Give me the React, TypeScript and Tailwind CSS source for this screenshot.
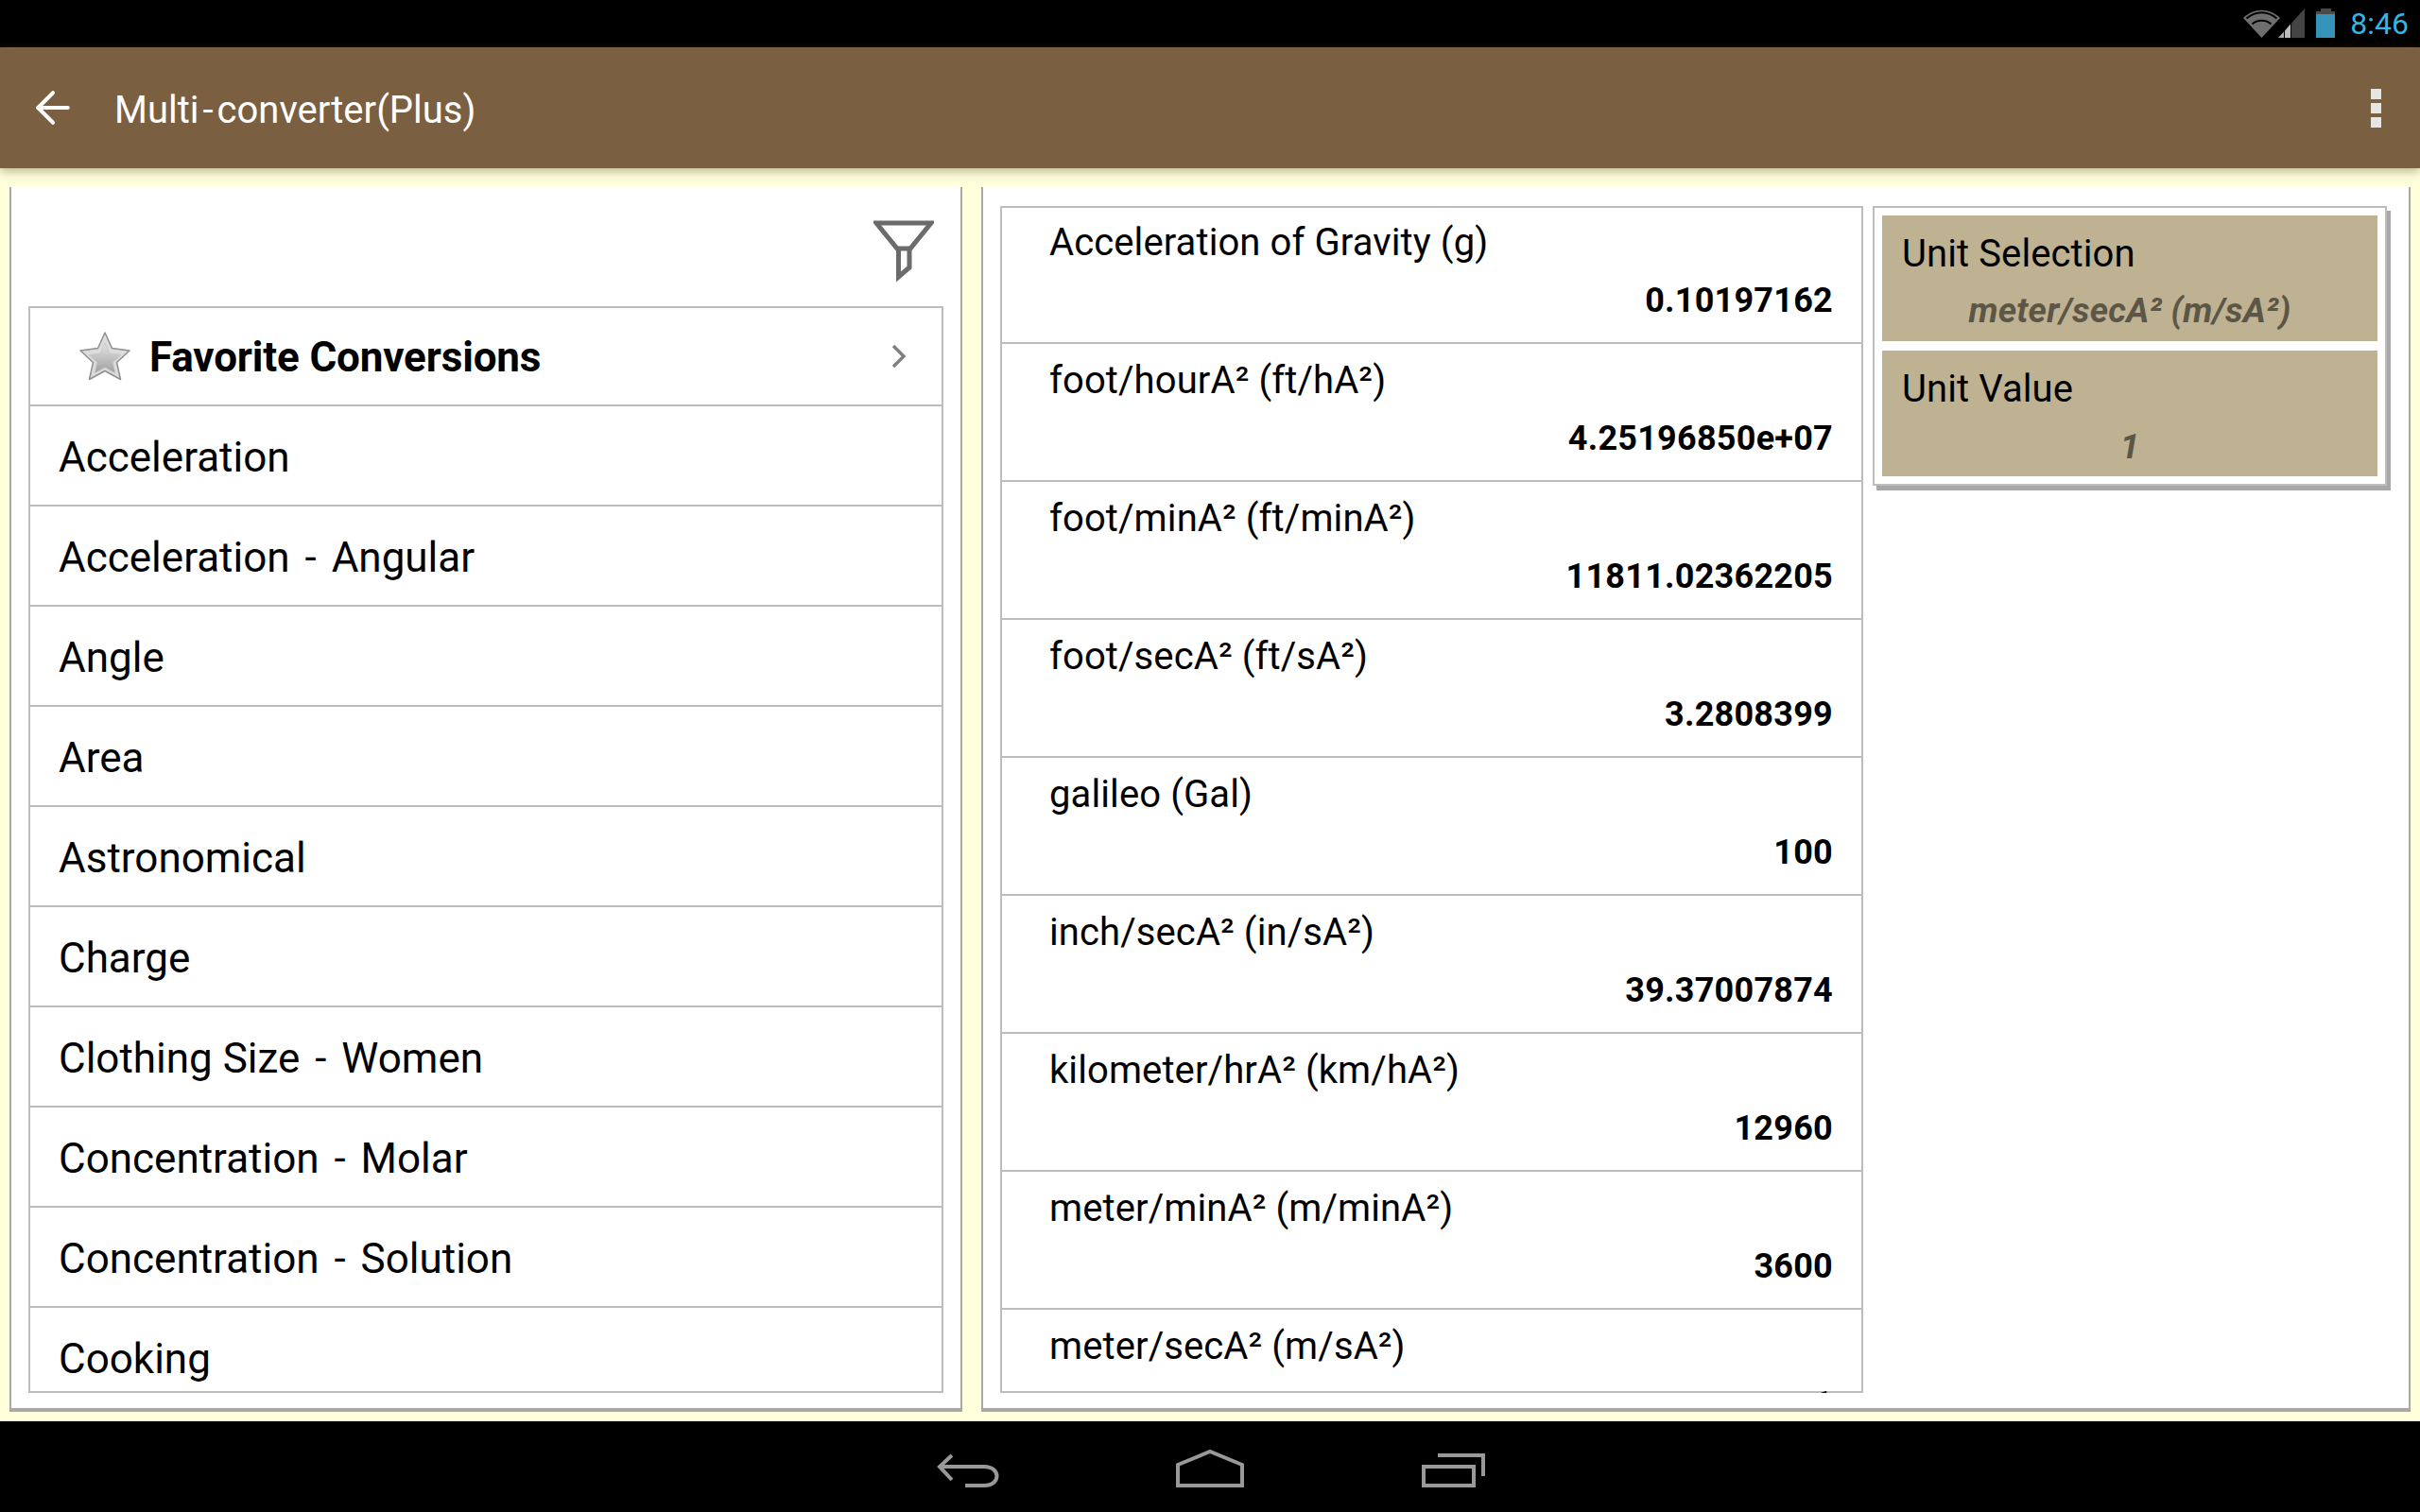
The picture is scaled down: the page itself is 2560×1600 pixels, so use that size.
import { ArrowLeft } from 'lucide-react';

const categories = [
  'Acceleration',
  'Acceleration - Angular',
  'Angle',
  'Area',
  'Astronomical',
  'Charge',
  'Clothing Size - Women',
  'Concentration - Molar',
  'Concentration - Solution',
  'Cooking',
];

const units = [
  { name: 'Acceleration of Gravity (g)', value: '0.10197162' },
  { name: 'foot/hourA² (ft/hA²)', value: '4.25196850e+07' },
  { name: 'foot/minA² (ft/minA²)', value: '11811.02362205' },
  { name: 'foot/secA² (ft/sA²)', value: '3.2808399' },
  { name: 'galileo (Gal)', value: '100' },
  { name: 'inch/secA² (in/sA²)', value: '39.37007874' },
  { name: 'kilometer/hrA² (km/hA²)', value: '12960' },
  { name: 'meter/minA² (m/minA²)', value: '3600' },
  { name: 'meter/secA² (m/sA²)', value: '1' },
];

function StatusIcons() {
  return (
    <svg width="98" height="32" viewBox="0 0 98 32" className="mr-[15px]">
      {/* wifi */}
      <path d="M0 10 C11 -1 28 -1 39 10 L19.5 31 Z" fill="#6e6e6e" />
      <path d="M3.5 10.5 C13 2 26 2 35.5 10.5" fill="none" stroke="#000" strokeWidth="2" />
      <path d="M9.5 16.5 C15 11.5 24 11.5 29.5 16.5" fill="none" stroke="#000" strokeWidth="2" />
      {/* signal */}
      <path d="M37 31 L43 24.5 V31 Z" fill="#a8a8a8" />
      <path d="M44 23.5 L50 16.5 V31 H44 Z" fill="#bcbcbc" />
      <path d="M51 15.5 L65 0 V31 H51 Z" fill="#444" />
      {/* battery */}
      <path d="M82 0 H93 V3 H97 V31 H77 V3 H82 Z" fill="#4a4a4a" />
      <rect x="77" y="6" width="20" height="25" fill="#3592b8" />
    </svg>
  );
}

function FilterIcon() {
  return (
    <svg width="64" height="66" viewBox="0 0 64 66">
      <path d="M3 3 H61 L39 30 H25 Z" fill="none" stroke="#6b6b6b" strokeWidth="5" />
      <path d="M26.5 30 V60 L38 50 V30" fill="none" stroke="#6b6b6b" strokeWidth="5" />
    </svg>
  );
}

function StarIcon() {
  return (
    <svg width="54" height="52" viewBox="0 0 54 52">
      <defs>
        <linearGradient id="starFill" x1="0" y1="0" x2="0" y2="1">
          <stop offset="0" stopColor="#e2e2e2" />
          <stop offset="1" stopColor="#a0a0a0" />
        </linearGradient>
      </defs>
      <path
        d="M27 1 L34.5 17.5 L53 20 L39.5 32.5 L43.5 50.5 L27 41.5 L10.5 50.5 L14.5 32.5 L1 20 L19.5 17.5 Z"
        fill="#dcdcdc"
        stroke="#8f8f8f"
        strokeWidth="1.5"
        strokeLinejoin="round"
      />
      <path
        d="M27 12 L32 23 L44 24.5 L35.5 32.5 L38 44 L27 38 L16 44 L18.5 32.5 L10 24.5 L22 23 Z"
        fill="url(#starFill)"
        stroke="#c9c9c9"
        strokeWidth="1"
      />
    </svg>
  );
}

function Chevron() {
  return (
    <svg width="18" height="26" viewBox="0 0 18 26" fill="none" stroke="#808080" strokeWidth="3.5" className="ml-auto">
      <path d="M3 2 L14 13 L3 24" />
    </svg>
  );
}

function NavBar() {
  return (
    <div className="h-[96px] bg-black relative shrink-0">
      <svg width="66" height="36" viewBox="0 0 66 36" fill="none" stroke="#999" strokeWidth="4" className="absolute left-[991px] top-[34px]">
        <path d="M16 2 L3 14 L16 28" />
        <path d="M3 14 H50 C68 14 68 34 50 34 H30" />
      </svg>
      <svg width="72" height="40" viewBox="0 0 72 40" fill="none" stroke="#999" strokeWidth="4" className="absolute left-[1244px] top-[30px]">
        <path d="M2 16 L36 2 L70 16 V38 H2 Z" />
      </svg>
      <svg width="68" height="36" viewBox="0 0 68 36" fill="none" stroke="#999" strokeWidth="4" className="absolute left-[1504px] top-[34px]">
        <rect x="2" y="14" width="53" height="20" />
        <path d="M17 2 H65 V24" />
      </svg>
    </div>
  );
}

// the hyphen in the reference's font is wider, give it some room
function CategoryName({ name }: { name: string }) {
  const parts = name.split(' - ');
  if (parts.length === 1) return <>{name}</>;
  return (
    <>
      {parts[0]} <span className="px-[5px]">-</span> {parts[1]}
    </>
  );
}

export default function App() {
  return (
    <div className="w-[2560px] h-[1600px] flex flex-col font-[Roboto,sans-serif] bg-[#ffffdc] overflow-hidden">
      {/* Status bar */}
      <div className="h-[50px] bg-black flex items-center justify-end shrink-0">
        <StatusIcons />
        <span className="text-[#33b5e5] text-[32px] leading-none mr-[12px]">8:46</span>
      </div>

      {/* Action bar */}
      <div className="relative z-10 h-[128px] bg-[#7b5f41] flex items-center shrink-0 shadow-[0_3px_10px_rgba(90,80,40,0.45)]">
        <ArrowLeft className="ml-[29px] text-white" size={54} strokeWidth={1.8} />
        <span className="ml-[38px] pt-[6px] text-white text-[40px]">
          Multi<span className="px-[4px]">-</span>converter(Plus)
        </span>
        <div className="ml-auto mr-[41px] flex flex-col gap-[4px]">
          <div className="w-[11px] h-[11px] bg-[#e8e4e0]" />
          <div className="w-[11px] h-[11px] bg-[#e8e4e0]" />
          <div className="w-[11px] h-[11px] bg-[#e8e4e0]" />
        </div>
      </div>

      {/* Content */}
      <div className="flex-1 min-h-0 flex gap-[20px] pt-[20px] pb-[10px] px-[10px]">
        {/* Categories */}
        <div className="w-[1008px] bg-white border-x-2 border-b-4 border-[#a8a8a8] pl-[18px] pr-[18px] pb-[16px] flex flex-col">
          <div className="h-[126px] flex justify-end pt-[35px] pr-[10px] shrink-0">
            <FilterIcon />
          </div>
          <div className="flex-1 min-h-0 overflow-hidden shadow-[inset_0_0_0_2px_#bdbdbd] px-[2px] pt-[2px]">
            <div className="h-[104px] border-b-2 border-[#bdbdbd] flex items-center pl-[52px] pr-[36px]">
              <StarIcon />
              <span className="ml-[20px] pt-[2px] text-[44px] tracking-[-0.15px] font-bold text-black">Favorite Conversions</span>
              <Chevron />
            </div>
            {categories.map((name) => (
              <div key={name} className="h-[106px] border-b-2 border-[#bdbdbd] flex items-center pl-[30px] pt-[4px] text-[44px] whitespace-pre text-black">
                <span>
                  <CategoryName name={name} />
                </span>
              </div>
            ))}
          </div>
        </div>

        {/* Unit values */}
        <div className="flex-1 bg-white border-x-2 border-b-4 border-[#a8a8a8] pl-[18px] pt-[20px] pb-[16px] flex items-start">
          <div className="w-[913px] h-full overflow-hidden shadow-[inset_0_0_0_2px_#bdbdbd] px-[2px]">
            {units.map((u) => (
              <div key={u.name} className="h-[146px] border-b-2 border-[#bdbdbd] pt-[15px] text-black">
                <div className="pl-[50px] text-[40px] tracking-[0.1px] leading-[48px]">{u.name}</div>
                <div className="mt-[15px] pr-[30px] text-right text-[36px] tracking-[0.25px] leading-[44px] font-bold">{u.value}</div>
              </div>
            ))}
          </div>

          <div className="ml-[10px] w-[544px] bg-white border-2 border-[#bdbdbd] p-[8px] flex flex-col gap-[10px] shadow-[4px_5px_0_#a8a8a8]">
            <div className="h-[133px] bg-[#bfb293]">
              <div className="pt-[17px] pl-[21px] text-[40px] tracking-[0.1px] leading-[48px] text-black">Unit Selection</div>
              <div className="mt-[14px] text-center text-[37px] tracking-[0.2px] leading-[44px] font-bold italic text-[#5c5646]">meter/secA² (m/sA²)</div>
            </div>
            <div className="h-[133px] bg-[#bfb293]">
              <div className="pt-[17px] pl-[21px] text-[40px] tracking-[0.1px] leading-[48px] text-black">Unit Value</div>
              <div className="mt-[15px] text-center text-[37px] leading-[44px] font-bold italic text-[#5c5646]">1</div>
            </div>
          </div>
        </div>
      </div>

      <NavBar />
    </div>
  );
}
